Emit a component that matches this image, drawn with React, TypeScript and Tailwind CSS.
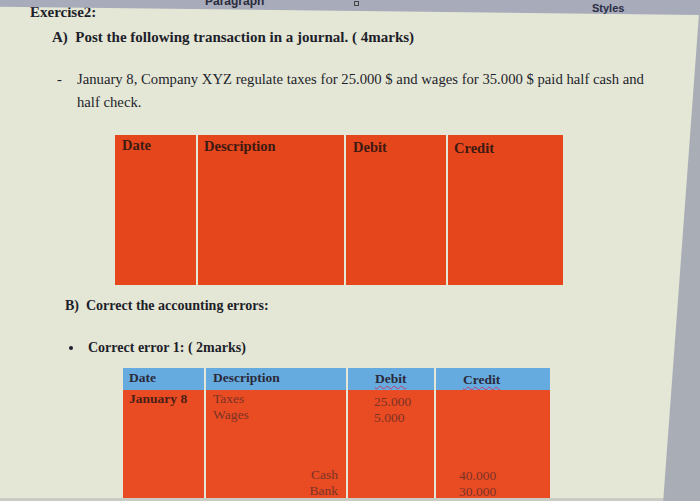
export default function App() {
  return (
    <div className="relative w-[700px] h-[501px] overflow-hidden bg-[#e4e6d6] flex flex-col font-['Liberation_Serif',serif] text-[#1d1f2a]">
      {/* ribbon edge (photo is tilted, so it gets taller to the right) */}
      <div className="absolute left-0 top-0 w-full h-[15px] bg-[#a7abba] [clip-path:polygon(0_0,100%_0,100%_100%,0_45%)] z-10">
        <span className="absolute left-[205px] -top-[8px] text-[12px] text-[#2a2c3c] font-['Liberation_Sans',sans-serif] font-bold">Paragraph</span>
        <span className="absolute left-[354px] top-[1px] w-[5px] h-[5px] border border-[#444]" />
        <span className="absolute left-[592px] top-[2px] text-[11px] leading-[12px] text-[#2b2d45] font-['Liberation_Sans',sans-serif] font-bold">Styles</span>
      </div>
      {/* monitor bezel on the right */}
      <div className="absolute right-0 top-0 w-[40px] h-full bg-[#a9adb6] [clip-path:polygon(100%_0,100%_100%,8%_100%)] z-10" />

      <div className="flex-1 min-h-0 flex flex-col pl-[30px] pt-[3px]">
        <div className="font-bold text-[15px] leading-[18px]">Exercise2:</div>
        <div className="font-bold text-[15px] leading-[18px] mt-[7px] pl-[22px]">
          A)&nbsp;&nbsp;Post the following transaction in a journal. ( 4marks)
        </div>

        <div className="flex mt-[22px] pl-[27px] text-[14.7px] leading-[23px]">
          <span className="w-[20px] shrink-0">-</span>
          <div>
            January 8, Company XYZ regulate taxes for 25.000 $ and wages for 35.000 $ paid half cash and
            <br />
            half check.
          </div>
        </div>

        {/* table 1 */}
        <div className="ml-[85px] mt-[21px] w-[447px] flex flex-col gap-[3px]">
          <div className="grid grid-cols-[81px_146px_100px_115px] gap-x-[2px] h-[20px] font-bold text-[14.5px] leading-[20px] text-[#3d1a12]">
            <div className="bg-[#e5461c] px-[7px]">Date</div>
            <div className="bg-[#e5461c] px-[6px] pt-[1px]">Description</div>
            <div className="bg-[#e5461c] px-[7px] pt-[2px]">Debit</div>
            <div className="bg-[#e5461c] px-[6px] pt-[3px]">Credit</div>
          </div>
          <div className="grid grid-cols-[81px_146px_100px_115px] gap-x-[2px] h-[127px]">
            <div className="bg-[#e5461c]" />
            <div className="bg-[#e5461c]" />
            <div className="bg-[#e5461c]" />
            <div className="bg-[#e5461c]" />
          </div>
        </div>

        <div className="font-bold text-[14px] leading-[18px] mt-[12px] pl-[35px]">
          B)&nbsp;&nbsp;Correct the accounting errors:
        </div>

        <div className="flex items-center mt-[24px] pl-[39px] font-bold text-[14px] leading-[18px]">
          <span className="w-[4px] h-[4px] rounded-full bg-[#1d1f2a] mr-[15px]" />
          Correct error 1: ( 2marks)
        </div>

        {/* table 2 */}
        <div className="ml-[93px] mt-[11px] w-[425px] flex flex-col gap-[2px] text-[13.5px]">
          <div className="grid grid-cols-[81px_140px_86px_114px] gap-x-[2px] h-[20px] font-bold leading-[20px] text-[#2a2a3a]">
            <div className="bg-[#66abdf] px-[6px]">Date</div>
            <div className="bg-[#66abdf] px-[7px]">Description</div>
            <div className="bg-[#66abdf] pl-[27px] pt-[1px]"><span className="underline decoration-wavy decoration-[#c23a6a] decoration-1 underline-offset-2">Debit</span></div>
            <div className="bg-[#66abdf] pl-[27px] pt-[2px]"><span className="underline decoration-wavy decoration-[#c23a6a] decoration-1 underline-offset-2">Credit</span></div>
          </div>
          <div className="grid grid-cols-[81px_140px_86px_114px] gap-x-[2px] h-[109px] leading-[15.5px] text-[#7a3326]">
            <div className="bg-[#e94b22] px-[6px] pt-[1px] font-bold text-[#4a1f16]">January 8</div>
            <div className="bg-[#e94b22] px-[7px] pt-[1px] flex flex-col">
              <span>Taxes</span>
              <span>Wages</span>
              <div className="mt-auto mb-[1px] text-right pr-[1px] flex flex-col">
                <span>Cash</span>
                <span>Bank</span>
              </div>
            </div>
            <div className="bg-[#e94b22] pl-[26px] pt-[4px] flex flex-col">
              <span>25.000</span>
              <span>5.000</span>
            </div>
            <div className="bg-[#e94b22] pl-[23px] flex flex-col">
              <div className="mt-auto flex flex-col">
                <span>40.000</span>
                <span>30.000</span>
              </div>
            </div>
          </div>
        </div>
      </div>
      <div className="h-[3px] shrink-0 bg-[#c9cbc5]" />
    </div>
  )
}
